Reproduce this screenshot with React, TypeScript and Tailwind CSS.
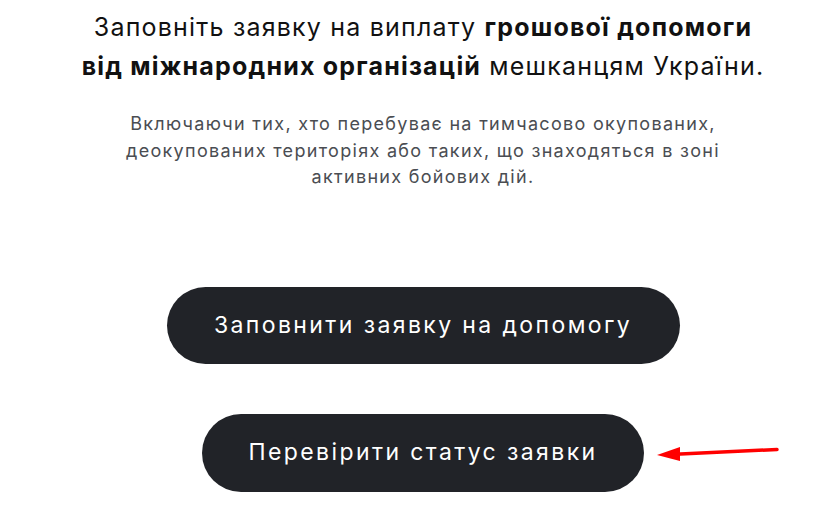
const font = "font-['Inter','Noto_Sans',sans-serif]";

export default function App() {
  return (
    <div className={`min-h-[515px] bg-white pl-[14px] ${font}`}>
      <div className="flex flex-col items-center">
        <h1 className="mt-[8px] text-center text-[25px] leading-[39px] tracking-[1.2px] text-[#111111]">
          Заповніть заявку на виплату <b>грошової допомоги</b>
          <br />
          <b>від міжнародних організацій</b> мешканцям України.
        </h1>
        <p className="mt-[25px] text-center text-[18px] leading-[26.5px] tracking-[1.3px] text-[#4a4d52]">
          Включаючи тих, хто перебуває на тимчасово окупованих,
          <br />
          деокупованих територіях або таких, що знаходяться в зоні
          <br />
          активних бойових дій.
        </p>
        <button className="mt-[96px] h-[77px] w-[513px] rounded-full bg-[#212328] text-[23px] tracking-[2.4px] text-white">
          Заповнити заявку на допомогу
        </button>
        <div className="relative mt-[50px]">
          <button className="h-[78px] w-[442px] rounded-full bg-[#212328] text-[23px] tracking-[2.4px] text-white">
            Перевірити статус заявки
          </button>
          <svg
            className="absolute left-[454px] top-[24px]"
            width="125"
            height="24"
            viewBox="0 0 125 24"
          >
            <line x1="14" y1="16.5" x2="121" y2="11.5" stroke="#ff0000" strokeWidth="3.5" strokeLinecap="round" />
            <polygon points="1,17 24,9 24,23" fill="#ff0000" />
          </svg>
        </div>
      </div>
    </div>
  );
}
